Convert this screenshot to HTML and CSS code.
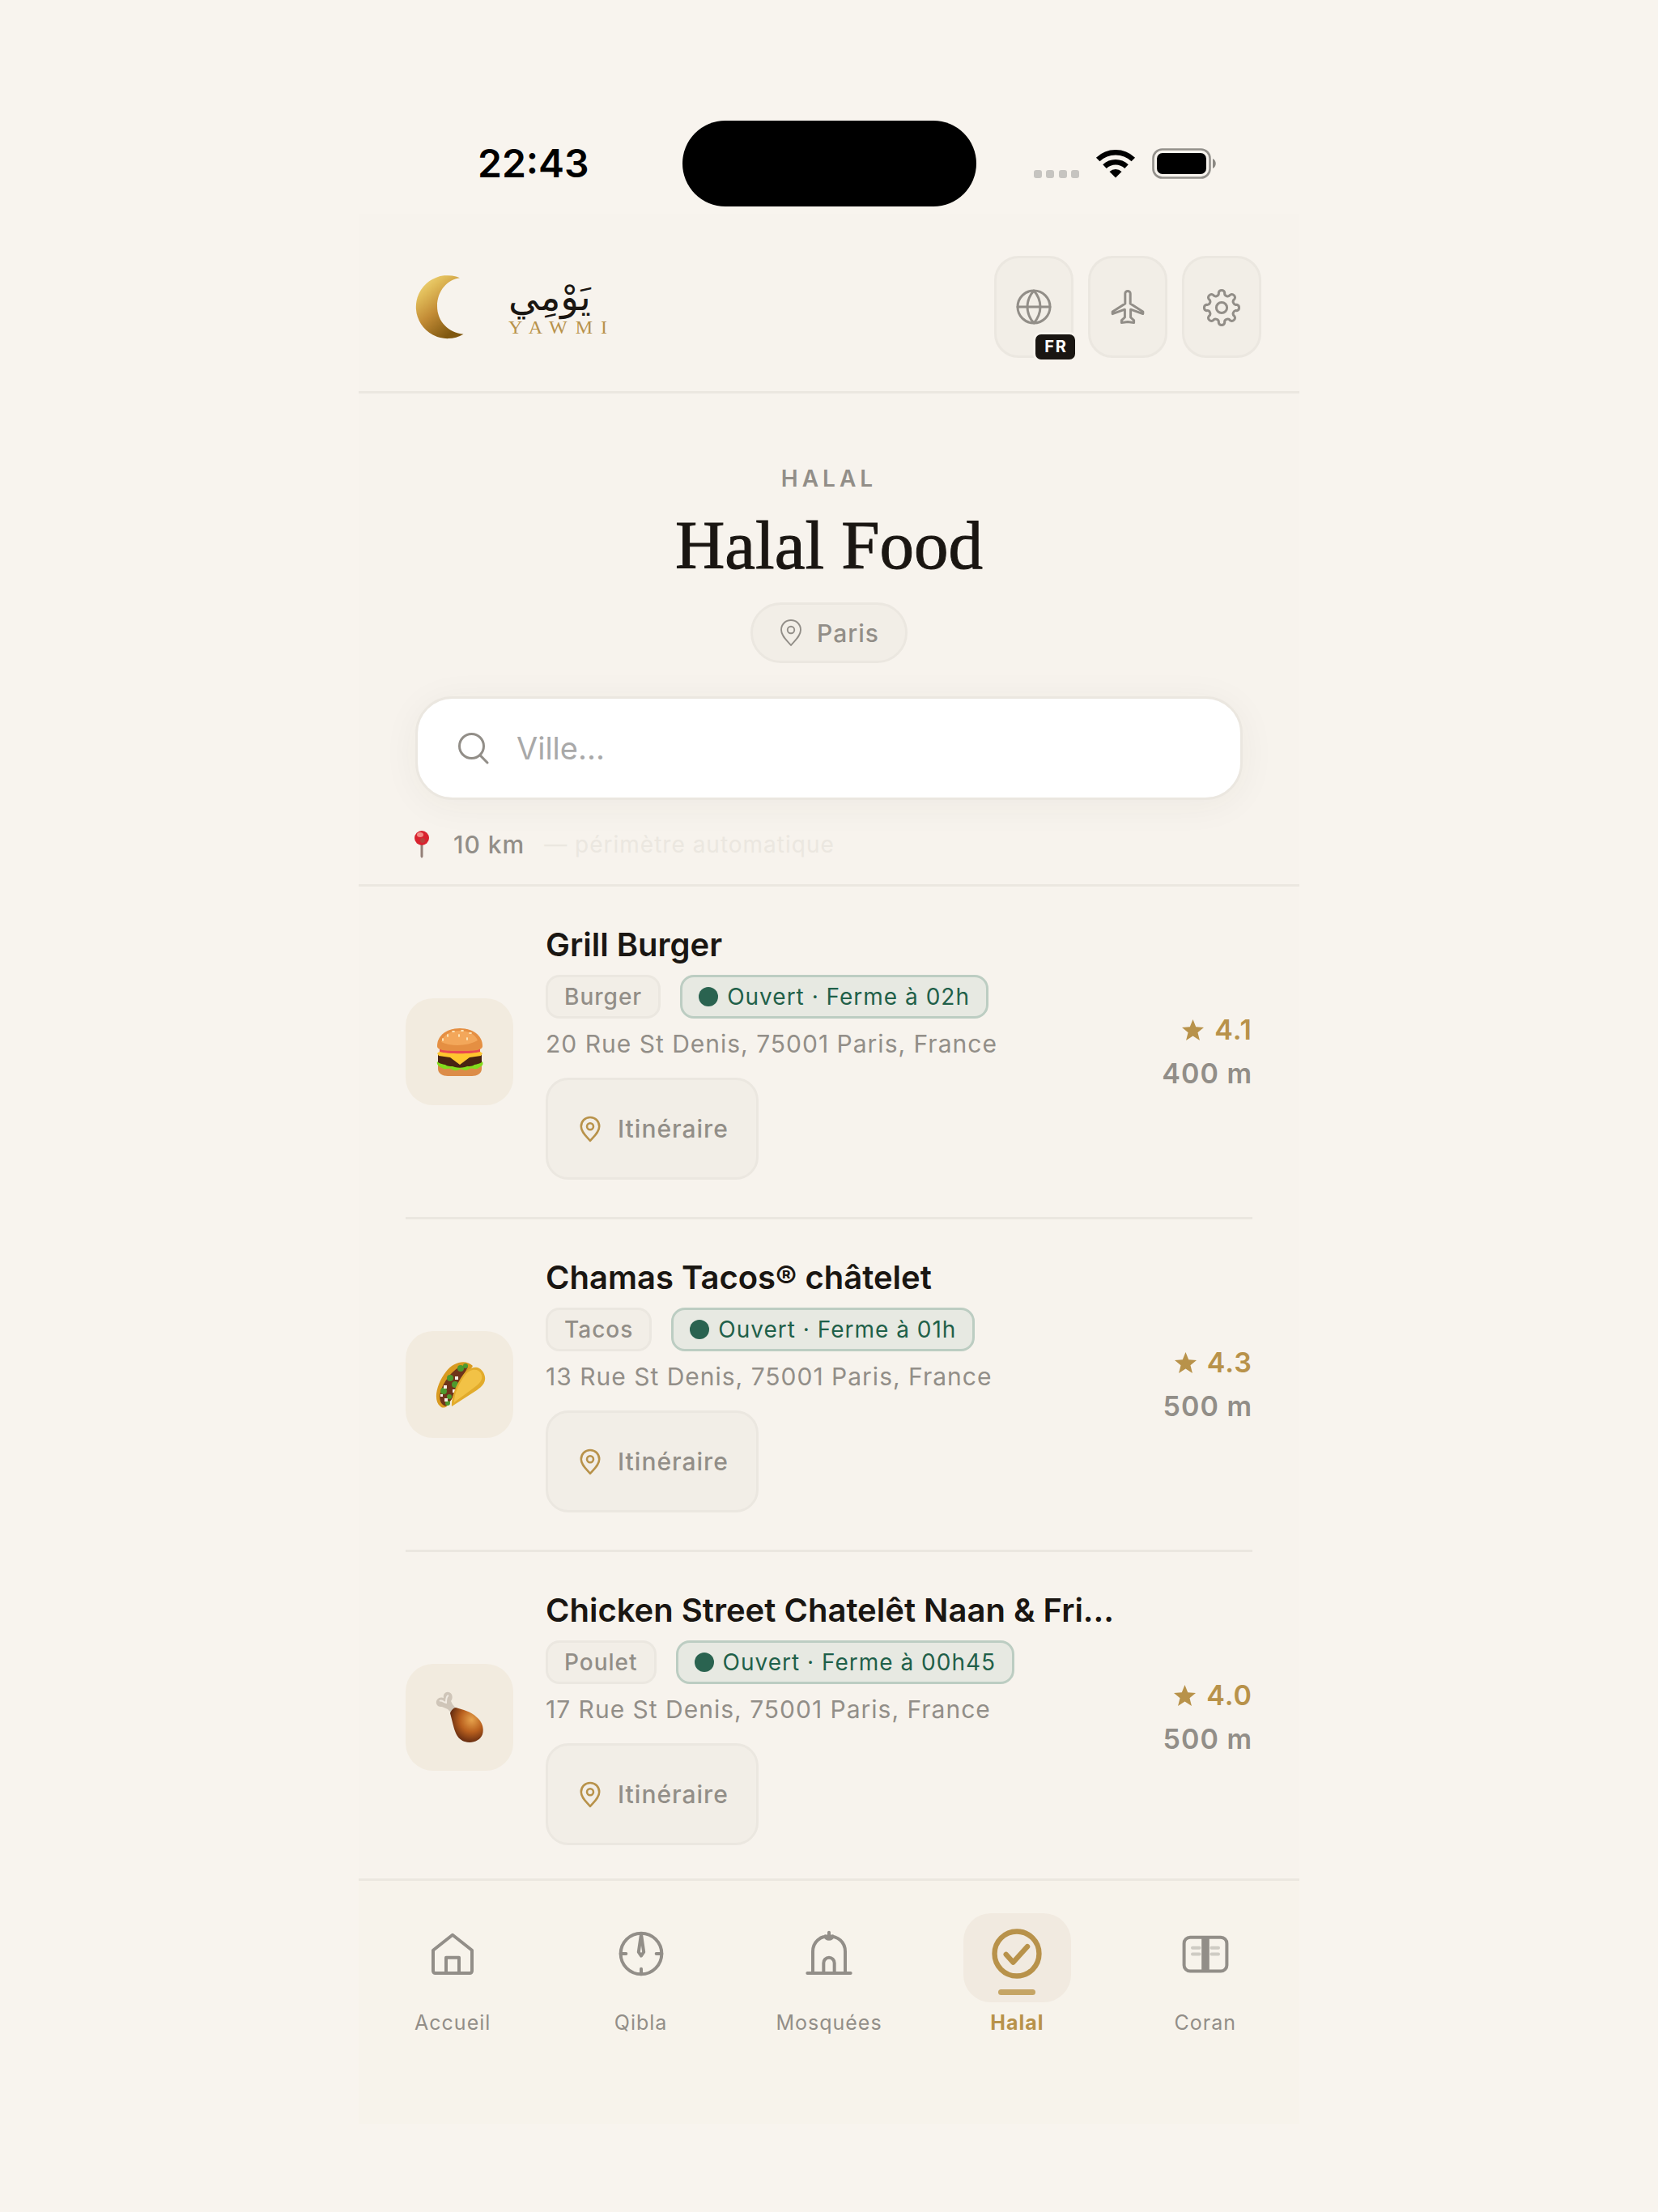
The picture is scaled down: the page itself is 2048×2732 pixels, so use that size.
FILE: index.html
```html
<!DOCTYPE html>
<html lang="fr">
<head>
  <meta charset="UTF-8">
  <meta name="viewport" content="width=device-width, initial-scale=1">
  <title>Yawmi - Halal Food</title>
  <link rel="stylesheet" href="styles.css">
</head>
<body>

<!-- shared icons -->
<svg class="defs" width="0" height="0" aria-hidden="true">
  <symbol id="pin" viewBox="0 0 24 28">
    <path d="M12 1.600c-5.600 0-9.600 4.200-9.600 9.600 0 6 5.600 10.400 9.600 15.200 4-4.800 9.600-9.200 9.600-15.200 0-5.400-4-9.600-9.600-9.600z"/>
    <circle cx="12" cy="11.200" r="3.400"/>
  </symbol>
  <symbol id="star" viewBox="0 0 24 24">
    <path d="M12 0l3.300 8.200 8.700.6-6.700 5.600 2.200 8.600-7.500-4.700L4.500 23l2.200-8.600L0 8.800l8.700-.6z"/>
  </symbol>
</svg>

<div class="phone">
  <div class="status-bar">
    <span class="time">22:43</span>
    <div class="island"></div>
    <div class="status-icons">
      <svg width="56" height="36" viewBox="0 0 56 36" fill="#c6c4c0">
        <rect x="0" y="26" width="10" height="10" rx="3"/>
        <rect x="15" y="26" width="10" height="10" rx="3"/>
        <rect x="31" y="26" width="10" height="10" rx="3"/>
        <rect x="46" y="26" width="10" height="10" rx="3"/>
      </svg>
      <svg width="50" height="36" viewBox="0 0 50 36">
        <path d="M25 35.500l-7.500-7.600a11 11 0 0 1 15 0z"/>
        <path d="M11.500 21.600a19.500 19.500 0 0 1 27 0" fill="none" stroke="#000" stroke-width="6.500"/>
        <path d="M3.200 13a31.500 31.500 0 0 1 43.600 0" fill="none" stroke="#000" stroke-width="6.500"/>
      </svg>
      <svg width="80" height="38" viewBox="0 0 80 38">
        <rect x="1.500" y="1.500" width="70" height="35" rx="11" fill="none" stroke="#93908b" stroke-width="2.600"/>
        <rect x="6" y="6" width="61" height="26" rx="7"/>
        <path d="M75 13c5 2 5 10 0 12z" fill="#8b8883"/>
      </svg>
    </div>
  </div>

  <header class="top-bar">
    <a class="logo" href="#">
      <svg width="60" height="80" viewBox="0 0 60 80">
        <defs>
          <linearGradient id="gold" x1="0.100" y1="0" x2="0.700" y2="1">
            <stop offset="0" stop-color="#f5dd80"/>
            <stop offset="0.250" stop-color="#e0bb58"/>
            <stop offset="0.550" stop-color="#c38c36"/>
            <stop offset="0.950" stop-color="#805810"/>
          </linearGradient>
        </defs>
        <path d="M55 4.200A39 39 0 1 0 59.500 73.800C41 72 27 58 27 39 27 20 40 6 55 4.200z" fill="url(#gold)"/>
      </svg>
      <span class="logo-text">
        <span class="logo-ar" lang="ar">يَوْمِي</span>
        <span class="logo-latin">YAWMI</span>
      </span>
    </a>
    <div class="actions">
      <button class="icon-btn" aria-label="Langue">
        <svg viewBox="0 0 24 24"><circle cx="12" cy="12" r="10"/><path d="M2 12h20M12 2a15.300 15.300 0 0 1 4 10 15.300 15.300 0 0 1-4 10 15.300 15.300 0 0 1-4-10 15.300 15.300 0 0 1 4-10z"/></svg>
        <span class="lang-badge">FR</span>
      </button>
      <button class="icon-btn" aria-label="Voyage">
        <svg viewBox="0 0 24 24"><path d="M10.400 3.800a1.600 1.600 0 0 1 3.200 0V10l7.800 5v1.300l-7.600-2.700v4.900l2 1.800v1.500L12 21.200l-3.800.6v-1.500l2-1.800v-4.900l-7.600 2.700V15l7.800-5z"/></svg>
      </button>
      <button class="icon-btn" aria-label="Réglages">
        <svg viewBox="0 0 24 24"><circle cx="12" cy="12.500" r="3.300"/><path d="M21.320 10.650A1.900 1.900 0 0 1 21.320 14.350A1.900 1.900 0 0 0 19.900 17.780A1.900 1.900 0 0 1 17.280 20.400A1.900 1.900 0 0 0 13.850 21.820A1.900 1.900 0 0 1 10.150 21.820A1.900 1.900 0 0 0 6.720 20.400A1.900 1.900 0 0 1 4.100 17.780A1.900 1.900 0 0 0 2.680 14.350A1.900 1.900 0 0 1 2.680 10.650A1.900 1.900 0 0 0 4.100 7.220A1.900 1.900 0 0 1 6.720 4.600A1.900 1.900 0 0 0 10.150 3.180A1.900 1.900 0 0 1 13.850 3.180A1.900 1.900 0 0 0 17.280 4.600A1.900 1.900 0 0 1 19.900 7.220A1.900 1.900 0 0 0 21.320 10.650z"/></svg>
      </button>
    </div>
  </header>

  <section class="hero">
    <p class="eyebrow">HALAL</p>
    <h1>Halal Food</h1>
    <button class="city"><svg><use href="#pin"/></svg>Paris</button>
    <label class="search">
      <svg viewBox="0 0 24 24"><circle cx="10.500" cy="10.500" r="9"/><path d="M17 17.500l5.200 5.300"/></svg>
      <input type="text" placeholder="Ville..." aria-label="Ville">
    </label>
    <p class="radius">
      <svg width="40" height="34" viewBox="0 0 40 34">
        <path d="M18.500 14h3v18l-1.500 2-1.500-2z" fill="#948078"/>
        <circle cx="20" cy="9" r="9" fill="#d8232f"/>
        <ellipse cx="18" cy="5" rx="4" ry="3" fill="#f28c86"/>
        <circle cx="21" cy="12" r="3" fill="#b8413c"/>
      </svg>
      <span class="km">10 km</span>
      <span class="auto">— périmètre automatique</span>
    </p>
  </section>

  <main class="list">
    <article class="place">
      <div class="thumb">
        <svg viewBox="0 0 64 64">
          <path d="M5 47h54v6c0 6-6 9-12 9H17c-6 0-12-3-12-9z" fill="#dc8c48"/>
          <path d="M5 35h54v10c0 5-5 7-10 7H15c-5 0-10-2-10-7z" fill="#482412"/>
          <path d="M4 44c3 3 6 3 10 4 4 3 8 1 12 3 4 1 8 1 12 0 4-2 8 0 12-3 4-1 7-1 10-4 2 5-2 6-5 8-4 3-7-1-11 1-4 3-7 2-11 0-5 3-8 3-12 0-4-1-7 2-11-1-4-2-7-4-6-8z" fill="#83dc1c"/>
          <path d="M4 34l4-3h48l4 3-2 3-14 2-12 9-12-9-14-2z" fill="#ffc62e"/>
          <path d="M7 28h50v4c-10 3-40 3-50 0z" fill="#e94a50"/>
          <path d="M4 25C4 11 17 3 32 3s28 8 28 22c0 6-13 6-28 6S4 31 4 25z" fill="#e58f42"/>
          <path d="M9 20C12 10 22 6 32 6s19 4 22 12c-12 7-32 8-45 2z" fill="#f3a75a"/>
          <g fill="#fde8be"><ellipse cx="24" cy="7" rx="2" ry="1"/><ellipse cx="35" cy="6" rx="2" ry="1"/><ellipse cx="17" cy="12" rx="1" ry="2"/><ellipse cx="31" cy="12" rx="1" ry="2"/><ellipse cx="41" cy="16" rx="1" ry="2"/><ellipse cx="45" cy="9" rx="2" ry="1"/><ellipse cx="11" cy="17" rx="1" ry="2"/></g>
        </svg>
      </div>
      <div class="info">
        <h2>Grill Burger</h2>
        <div class="tags">
          <span class="tag">Burger</span>
          <span class="tag open"><i class="dot"></i>Ouvert · Ferme à 02h</span>
        </div>
        <p class="address">20 Rue St Denis, 75001 Paris, France</p>
        <button class="route"><svg><use href="#pin"/></svg>Itinéraire</button>
      </div>
      <div class="meta">
        <span class="rating"><svg><use href="#star"/></svg>4.1</span>
        <span class="distance">400 m</span>
      </div>
    </article>

    <article class="place">
      <div class="thumb">
        <svg viewBox="0 0 64 64">
          <path d="M8 59C-2 51 4 30 15 16 25 3 40 1 48 9L16 59c-3 2-6 2-8 0z" fill="#d99a20"/>
          <path d="M10 56C3 48 10 32 20 20 27 12 36 6 42 10L22 50l-6 8c-2 1-4 0-6-2z" fill="#6f341a"/>
          <g fill="#4d9a2e"><circle cx="33" cy="12" r="4"/><circle cx="20" cy="24" r="4"/><circle cx="26" cy="32" r="4"/><circle cx="12" cy="40" r="4"/><circle cx="19" cy="47" r="3"/><circle cx="17" cy="55" r="3"/><circle cx="39" cy="9" r="3"/></g>
          <g fill="#f7efe6"><rect x="26" y="22" width="4" height="4"/><rect x="12" y="33" width="4" height="4"/><rect x="23" y="38" width="4" height="4"/><rect x="13" y="49" width="4" height="4"/><rect x="8" y="44" width="3" height="3"/></g>
          <path d="M22 59c-1-12 6-28 14-39 7-10 19-13 25-3 5 9 1 16-8 22z" fill="#e2ab2b"/>
          <path d="M25 54c0-11 6-23 13-33 5-8 16-10 20-3 4 8-2 13-10 19z" fill="#f2c246"/>
        </svg>
      </div>
      <div class="info">
        <h2>Chamas Tacos® châtelet</h2>
        <div class="tags">
          <span class="tag">Tacos</span>
          <span class="tag open"><i class="dot"></i>Ouvert · Ferme à 01h</span>
        </div>
        <p class="address">13 Rue St Denis, 75001 Paris, France</p>
        <button class="route"><svg><use href="#pin"/></svg>Itinéraire</button>
      </div>
      <div class="meta">
        <span class="rating"><svg><use href="#star"/></svg>4.3</span>
        <span class="distance">500 m</span>
      </div>
    </article>

    <article class="place">
      <div class="thumb">
        <svg viewBox="0 0 64 64">
          <defs>
            <radialGradient id="meat" cx="0.650" cy="0.350" r="0.700">
              <stop offset="0" stop-color="#e6a24c"/>
              <stop offset="0.500" stop-color="#b9601e"/>
              <stop offset="1" stop-color="#5c260f"/>
            </radialGradient>
          </defs>
          <path d="M17 22L10 19C4 20 1 14 4 10c2-3 6-3 8-2C11 3 15 0 18 1c5 1 6 7 3 11l2 4 5 6-6 5z" fill="#cfc5b8"/>
          <path d="M7 12c3-2 5 2 8 2 0-4 0-8 3-9" fill="none" stroke="#f1ebe2" stroke-width="2"/>
          <path d="M20 27c1-3 4-7 7-7 9 3 18 4 26 12 7 6 9 14 7 21-3 8-13 12-22 9-12-4-13-17-18-35z" fill="url(#meat)"/>
        </svg>
      </div>
      <div class="info">
        <h2>Chicken Street Chatelêt Naan &amp; Fri…</h2>
        <div class="tags">
          <span class="tag">Poulet</span>
          <span class="tag open"><i class="dot"></i>Ouvert · Ferme à 00h45</span>
        </div>
        <p class="address">17 Rue St Denis, 75001 Paris, France</p>
        <button class="route"><svg><use href="#pin"/></svg>Itinéraire</button>
      </div>
      <div class="meta">
        <span class="rating"><svg><use href="#star"/></svg>4.0</span>
        <span class="distance">500 m</span>
      </div>
    </article>
  </main>

  <nav class="tab-bar">
    <a href="#">
      <span class="tab-icon"><svg viewBox="0 0 24 24"><path d="M3 10.400L12 3.300l9 7.100V20a1 1 0 0 1-1 1H4a1 1 0 0 1-1-1z"/><path d="M9 21v-7.200h6V21"/></svg></span>
      Accueil
    </a>
    <a href="#">
      <span class="tab-icon"><svg viewBox="0 0 24 24"><circle cx="12" cy="12" r="9.500"/><path d="M2.500 12H5M19 12h2.500M12 19v2.500M12 3l-1.200 8.200L12 13l1.200-1.800z"/></svg></span>
      Qibla
    </a>
    <a href="#">
      <span class="tab-icon"><svg viewBox="0 0 24 24"><path d="M2 21h20M4.500 21V11C4.500 6.500 8 3.800 12 3.800s7.500 2.700 7.500 7.200v10M12 2.200v1.600M10.200 3.900a1.900 1.900 0 0 0 3.600 0M9.500 21v-4.700a2.500 2.500 0 0 1 5 0V21"/></svg></span>
      Mosquées
    </a>
    <a href="#" class="active" aria-current="page">
      <span class="tab-icon"><svg viewBox="0 0 24 24"><circle cx="12" cy="12" r="10.300"/><path d="M7 12.300l3.300 3.700 6.600-7.300"/></svg></span>
      Halal
    </a>
    <a href="#">
      <span class="tab-icon"><svg viewBox="0 0 24 24"><rect x="2.100" y="4.400" width="19.800" height="15.700" rx="2.800"/><path d="M12 4.400v15.700" stroke-width="3.600" stroke-linecap="butt"/><path d="M6 9.300h3.200M6 12.200h3.200M14.800 9.300H18M14.800 12.200H18" opacity=".4"/></svg></span>
      Coran
    </a>
  </nav>
</div>

</body>
</html>
```

FILE: styles.css
```css
* {
  box-sizing: border-box;
}
body {
  margin: 0;
  min-height: 100vh;
  background: #f8f4ee;
  color: #1a1612;
  font-family: Inter, "Liberation Sans", sans-serif;
}
h1, h2, p {
  margin: 0;
}
a {
  text-decoration: none;
  color: inherit;
}
button, input {
  font-family: inherit;
}
button {
  cursor: pointer;
  color: #928e88;
  background: #f2eee7;
  border: 3px solid #ebe7e0;
  padding: 0;
}
svg {
  flex-shrink: 0;
}
.defs {
  position: absolute;
}
.phone {
  max-width: 1162px;
  margin: 0 auto;
}

/* status bar */
.status-bar {
  display: grid;
  grid-template-columns: 1fr auto 1fr;
  align-items: center;
  padding: 149px 102px 9px;
}
.time {
  margin-left: 45px;
  font-size: 48px;
  line-height: 56px;
  font-weight: 600;
  color: #000;
}
.island {
  width: 363px;
  height: 106px;
  border-radius: 53px;
  background: #000;
}
.status-icons {
  display: flex;
  justify-content: flex-end;
  align-items: center;
  gap: 20px;
}

/* header */
.top-bar {
  display: flex;
  justify-content: space-between;
  align-items: center;
  padding: 52px 47px 41px 70px;
  background: #f7f3ed;
  border-bottom: 3px solid #ebe7e0;
}
.logo {
  display: flex;
  align-items: center;
  gap: 55px;
}
.logo-text {
  display: flex;
  flex-direction: column;
  align-items: flex-start;
}
.logo-ar {
  font-family: "DejaVu Sans", sans-serif;
  font-size: 47px;
  line-height: 50px;
}
.logo-latin {
  font-family: "Liberation Serif", serif;
  font-size: 24px;
  line-height: 24px;
  letter-spacing: 10px;
  color: #b8924a;
}
.actions {
  display: flex;
  gap: 18px;
}
.icon-btn {
  position: relative;
  display: flex;
  align-items: center;
  justify-content: center;
  width: 98px;
  height: 126px;
  border-radius: 30px;
}
.icon-btn svg {
  width: 48px;
  height: 48px;
}
.icon-btn svg, .city svg, .route svg, .search svg, .tab-icon svg {
  fill: none;
  stroke: currentColor;
  stroke-width: 1.5;
  stroke-linecap: round;
  stroke-linejoin: round;
}
.lang-badge {
  position: absolute;
  right: -8px;
  bottom: -8px;
  padding: 0 9px 0 11px;
  border: 3px solid #f7f3ed;
  border-radius: 10px;
  background: #1a1612;
  color: #fff;
  font-size: 20px;
  line-height: 31px;
  font-weight: 700;
  letter-spacing: 2px;
}

/* hero */
.hero {
  display: flex;
  flex-direction: column;
  align-items: center;
  padding: 88px 58px 29px;
  background: #f7f3ed;
  border-bottom: 3px solid #ebe7e0;
}
.eyebrow {
  font-size: 28px;
  line-height: 34px;
  font-weight: 600;
  letter-spacing: 5px;
  color: #928e88;
}
h1 {
  margin-top: 17px;
  font-family: "Liberation Serif", serif;
  font-size: 85px;
  line-height: 96px;
  font-weight: 400;
  -webkit-text-stroke: 1px #1a1612;
}
.city {
  display: flex;
  align-items: center;
  gap: 17px;
  height: 75px;
  margin-top: 23px;
  padding: 0 32px;
  border-radius: 38px;
  font-size: 30px;
  font-weight: 500;
  letter-spacing: 1px;
}
.city svg {
  width: 30px;
  height: 35px;
}
.search {
  display: flex;
  align-items: center;
  gap: 33px;
  align-self: stretch;
  height: 128px;
  margin: 41px 12px 0;
  padding: 0 49px;
  border: 3px solid #ebe7e0;
  border-radius: 46px;
  background: #fff;
  box-shadow: 0 6px 46px rgba(60, 50, 30, 0.05);
  color: #928e88;
}
.search svg {
  width: 40px;
  height: 40px;
  stroke-width: 1.8;
}
.search input {
  flex: 1;
  min-width: 0;
  border: 0;
  outline: 0;
  padding: 0;
  background: none;
  color: #1a1612;
  font-size: 38px;
}
.search input::placeholder {
  color: #a9a9a9;
}
.radius {
  display: flex;
  align-items: center;
  align-self: stretch;
  margin-top: 35px;
  font-size: 30px;
  line-height: 40px;
  letter-spacing: 1px;
}
.km {
  margin: 0 24px 0 19px;
  font-weight: 500;
  color: #928e88;
}
.auto {
  color: #ebe7e0;
  font-size: 28px;
}

/* places */
.list {
  padding: 0 58px;
  background: #f7f3ed;
}
.place {
  display: flex;
  align-items: center;
  gap: 40px;
  padding: 46px 0;
  border-bottom: 3px solid #ebe7e0;
}
.place:last-child {
  padding-bottom: 41px;
  border-bottom: 0;
}
.thumb {
  display: flex;
  align-items: center;
  justify-content: center;
  flex-shrink: 0;
  width: 133px;
  height: 132px;
  border-radius: 34px;
  background: #f2ebdf;
}
.thumb svg {
  width: 64px;
  height: 64px;
}
.info {
  flex: 1;
  min-width: 0;
}
h2 {
  font-size: 40px;
  line-height: 52px;
  font-weight: 600;
  white-space: nowrap;
}
.tags {
  display: flex;
  gap: 24px;
  margin-top: 11px;
}
.tag {
  display: flex;
  align-items: center;
  height: 54px;
  padding: 0 20px;
  border: 3px solid #ebe7e0;
  border-radius: 17px;
  background: #f2eee7;
  color: #928e88;
  font-size: 28px;
  font-weight: 500;
  letter-spacing: 1px;
}
.tag.open {
  background: #e7e9e2;
  border-color: #bccdc2;
  color: #1f6049;
  font-weight: 400;
}
.dot {
  width: 24px;
  height: 24px;
  margin-right: 11px;
  border-radius: 50%;
  background: #2a6350;
}
.address {
  margin-top: 11px;
  font-size: 30px;
  line-height: 40px;
  letter-spacing: 1px;
  color: #928e88;
}
.route {
  display: flex;
  align-items: center;
  gap: 20px;
  height: 126px;
  margin-top: 22px;
  padding: 0 34px 0 38px;
  border-radius: 28px;
  font-size: 30px;
  font-weight: 500;
  letter-spacing: 1px;
}
.route svg {
  width: 28px;
  height: 33px;
  stroke: #b8924a;
  stroke-width: 2.2;
}
.meta {
  display: flex;
  flex-direction: column;
  align-items: flex-end;
  font-size: 34px;
  line-height: 54px;
  font-weight: 600;
  letter-spacing: 1px;
}
.rating {
  display: flex;
  align-items: center;
  gap: 13px;
  color: #b8924a;
}
.rating svg {
  width: 27px;
  height: 27px;
  fill: #b8924a;
}
.distance {
  color: #928e88;
}

/* bottom tabs */
.tab-bar {
  display: grid;
  grid-template-columns: repeat(5, 1fr);
  padding: 40px 0 108px;
  background: #f7f3eb;
  border-top: 3px solid #ebe7e0;
}
.tab-bar a {
  display: flex;
  flex-direction: column;
  align-items: center;
  gap: 8px;
  color: #928e88;
  font-size: 25px;
  line-height: 34px;
  letter-spacing: 1px;
}
.tab-icon {
  display: flex;
  flex-direction: column;
  align-items: center;
  gap: 12px;
  width: 133px;
  height: 110px;
  padding-top: 18px;
  border-radius: 34px;
}
.tab-icon svg {
  width: 64px;
  height: 64px;
}
.tab-bar .active {
  color: #b8924a;
  font-weight: 700;
}
.active .tab-icon {
  background: #f1eae0;
}
.active .tab-icon svg {
  stroke-width: 2.4;
}
.active .tab-icon::after {
  content: "";
  width: 46px;
  height: 7px;
  border-radius: 4px;
  background: #c5a565;
}
```
